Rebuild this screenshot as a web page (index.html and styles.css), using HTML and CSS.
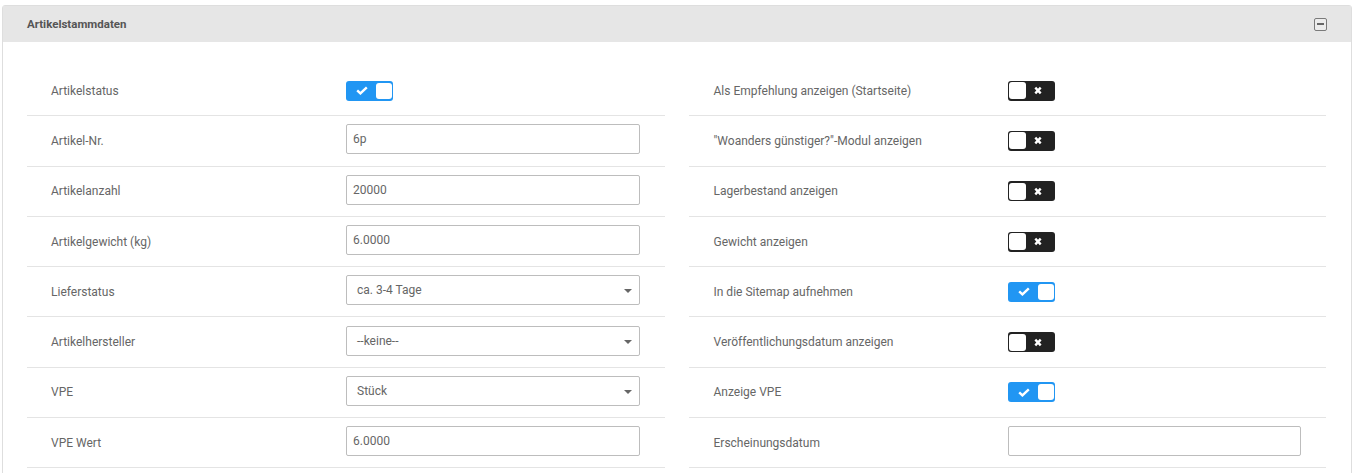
FILE: index.html
```html
<!DOCTYPE html>
<html lang="de">
<head>
<meta charset="utf-8">
<title>Artikelstammdaten</title>
<link rel="stylesheet" href="styles.css">
</head>
<body>
<div class="panel">
  <div class="panel-head">
    <span class="title">Artikelstammdaten</span>
    <span class="collapse" aria-label="Einklappen"></span>
  </div>
  <div class="panel-body">
    <div class="col">
      <div class="row"><span class="label">Artikelstatus</span><div class="ctrl"><span class="toggle on"><svg class="ico" viewBox="0 0 12 9" width="12" height="9"><path d="M1.2 4.4 L4.4 7.4 L10.8 1.4" fill="none" stroke="#fff" stroke-width="2.4"/></svg><span class="knob"></span></span></div></div>
      <div class="row"><span class="label">Artikel-Nr.</span><div class="ctrl"><div class="input">6p</div></div></div>
      <div class="row"><span class="label">Artikelanzahl</span><div class="ctrl"><div class="input">20000</div></div></div>
      <div class="row"><span class="label">Artikelgewicht (kg)</span><div class="ctrl"><div class="input">6.0000</div></div></div>
      <div class="row"><span class="label">Lieferstatus</span><div class="ctrl"><div class="select">ca. 3-4 Tage<span class="caret"></span></div></div></div>
      <div class="row"><span class="label">Artikelhersteller</span><div class="ctrl"><div class="select">--keine--<span class="caret"></span></div></div></div>
      <div class="row"><span class="label">VPE</span><div class="ctrl"><div class="select">Stück<span class="caret"></span></div></div></div>
      <div class="row"><span class="label">VPE Wert</span><div class="ctrl"><div class="input">6.0000</div></div></div>
    </div>
    <div class="col">
      <div class="row"><span class="label">Als Empfehlung anzeigen (Startseite)</span><div class="ctrl"><span class="toggle off"><span class="knob"></span><svg class="ico" viewBox="0 0 10 10" width="10" height="9"><path d="M2 1.8 L8 8.2 M8 1.8 L2 8.2" fill="none" stroke="#fff" stroke-width="2.6"/></svg></span></div></div>
      <div class="row"><span class="label">"Woanders günstiger?"-Modul anzeigen</span><div class="ctrl"><span class="toggle off"><span class="knob"></span><svg class="ico" viewBox="0 0 10 10" width="10" height="9"><path d="M2 1.8 L8 8.2 M8 1.8 L2 8.2" fill="none" stroke="#fff" stroke-width="2.6"/></svg></span></div></div>
      <div class="row"><span class="label">Lagerbestand anzeigen</span><div class="ctrl"><span class="toggle off"><span class="knob"></span><svg class="ico" viewBox="0 0 10 10" width="10" height="9"><path d="M2 1.8 L8 8.2 M8 1.8 L2 8.2" fill="none" stroke="#fff" stroke-width="2.6"/></svg></span></div></div>
      <div class="row"><span class="label">Gewicht anzeigen</span><div class="ctrl"><span class="toggle off"><span class="knob"></span><svg class="ico" viewBox="0 0 10 10" width="10" height="9"><path d="M2 1.8 L8 8.2 M8 1.8 L2 8.2" fill="none" stroke="#fff" stroke-width="2.6"/></svg></span></div></div>
      <div class="row"><span class="label">In die Sitemap aufnehmen</span><div class="ctrl"><span class="toggle on"><svg class="ico" viewBox="0 0 12 9" width="12" height="9"><path d="M1.2 4.4 L4.4 7.4 L10.8 1.4" fill="none" stroke="#fff" stroke-width="2.4"/></svg><span class="knob"></span></span></div></div>
      <div class="row"><span class="label">Veröffentlichungsdatum anzeigen</span><div class="ctrl"><span class="toggle off"><span class="knob"></span><svg class="ico" viewBox="0 0 10 10" width="10" height="9"><path d="M2 1.8 L8 8.2 M8 1.8 L2 8.2" fill="none" stroke="#fff" stroke-width="2.6"/></svg></span></div></div>
      <div class="row"><span class="label">Anzeige VPE</span><div class="ctrl"><span class="toggle on"><svg class="ico" viewBox="0 0 12 9" width="12" height="9"><path d="M1.2 4.4 L4.4 7.4 L10.8 1.4" fill="none" stroke="#fff" stroke-width="2.4"/></svg><span class="knob"></span></span></div></div>
      <div class="row"><span class="label">Erscheinungsdatum</span><div class="ctrl"><div class="input"></div></div></div>
    </div>
  </div>
</div>
</body>
</html>
```

FILE: styles.css
```css
* { box-sizing: border-box; }
html, body { margin: 0; padding: 0; background: #fff; }
body {
  font-family: Roboto, "Liberation Sans", Arial, sans-serif;
  font-size: 12px;
  color: #666;
  padding: 5px 0 0 2px;
}
.panel {
  width: 1350px;
  border: 1px solid #dedede;
  border-radius: 3px 3px 0 0;
  background: #fff;
}
.panel-head {
  height: 36px;
  background: #e6e6e6;
  display: flex;
  align-items: center;
  justify-content: space-between;
  padding: 0 24px 0 24px;
}
.title {
  font-weight: 700;
  color: #555;
  font-size: 11.5px;
}
.collapse {
  position: relative;
  width: 13px;
  height: 13px;
  border: 1px solid #7a7a7a;
  border-radius: 2px;
  background: #ececec;
}
.collapse::after {
  content: "";
  position: absolute;
  left: 2px;
  right: 2px;
  top: 4.5px;
  height: 2px;
  background: #666;
}
.panel-body {
  display: grid;
  grid-template-columns: 1fr 1fr;
  column-gap: 24px;
  padding: 24px 25px 20px 24px;
}
.row {
  height: 50.3px;
  display: grid;
  grid-template-columns: 319px 1fr;
  align-items: center;
  border-bottom: 1px solid #e4e4e4;
  padding-right: 25px;
}
.label {
  padding-left: 24px;
  color: #666;
  white-space: nowrap;
}
.col + .col .label { padding-left: 25px; }
.ctrl { display: flex; align-items: center; }
.input, .select {
  width: 100%;
  height: 30px;
  margin-bottom: 3px;
  border: 1px solid #bdbdbd;
  border-radius: 2px;
  display: flex;
  align-items: center;
  padding-left: 6px;
  color: #666;
}
.select {
  padding-left: 10px;
  position: relative;
}
.caret {
  position: absolute;
  right: 7px;
  top: 13px;
  width: 0;
  height: 0;
  border-left: 4px solid transparent;
  border-right: 4px solid transparent;
  border-top: 4px solid #666;
}
.toggle {
  width: 47px;
  height: 20px;
  border-radius: 3px;
  display: flex;
  align-items: center;
}
.toggle.on {
  background: #2196f3;
  justify-content: space-between;
  padding: 2px 1px 2px 10px;
}
.toggle.off {
  background: #222;
  padding: 1px 12px 1px 1px;
  justify-content: space-between;
}
.knob {
  width: 16px;
  height: 16px;
  background: #fff;
  border-radius: 3px;
}
.toggle.off .knob { width: 17px; height: 17px; }
.ico { display: block; }
```
